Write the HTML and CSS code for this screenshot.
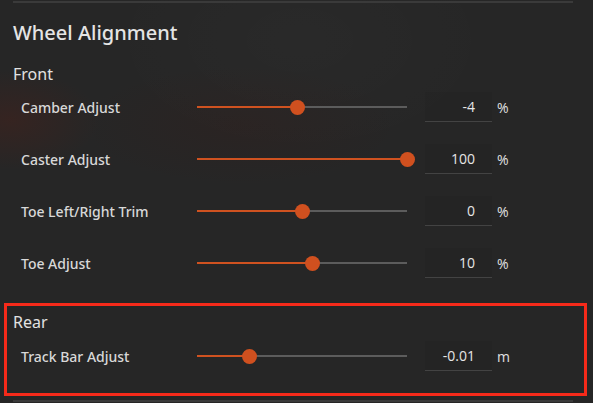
FILE: index.html
```html
<!DOCTYPE html>
<html lang="en">
<head>
  <meta charset="UTF-8" />
  <meta name="viewport" content="width=device-width, initial-scale=1" />
  <title>Wheel Alignment</title>
  <link rel="stylesheet" href="styles.css">
</head>
<body>
  <div class="panel">
    <div class="rule"></div>
    <h2>Wheel Alignment</h2>

    <div class="group">
      <div class="group-title">Front</div>

      <div class="row">
        <span class="label">Camber Adjust</span>
        <div class="slider">
          <div class="fill" style="width: 48%"></div>
          <div class="thumb"></div>
          <div class="rest"></div>
        </div>
        <div class="value">-4</div>
        <span class="unit">%</span>
      </div>

      <div class="row">
        <span class="label">Caster Adjust</span>
        <div class="slider">
          <div class="fill" style="width: 100%"></div>
          <div class="thumb"></div>
          <div class="rest"></div>
        </div>
        <div class="value">100</div>
        <span class="unit">%</span>
      </div>

      <div class="row">
        <span class="label">Toe Left/Right Trim</span>
        <div class="slider">
          <div class="fill" style="width: 50%"></div>
          <div class="thumb"></div>
          <div class="rest"></div>
        </div>
        <div class="value">0</div>
        <span class="unit">%</span>
      </div>

      <div class="row">
        <span class="label">Toe Adjust</span>
        <div class="slider">
          <div class="fill" style="width: 55%"></div>
          <div class="thumb"></div>
          <div class="rest"></div>
        </div>
        <div class="value">10</div>
        <span class="unit">%</span>
      </div>
    </div>

    <div class="group rear">
      <div class="group-title">Rear</div>

      <div class="row">
        <span class="label">Track Bar Adjust</span>
        <div class="slider">
          <div class="fill" style="width: 25%"></div>
          <div class="thumb"></div>
          <div class="rest"></div>
        </div>
        <div class="value">-0.01</div>
        <span class="unit">m</span>
      </div>
    </div>

    <div class="rule bottom"></div>
  </div>
</body>
</html>
```

FILE: styles.css
```css
html, body { height: 100%; }
body {
  margin: 0;
  font-family: 'Noto Sans', 'Open Sans', sans-serif;
  color: #dedede;
  background-color: #262626;
  background-image:
    radial-gradient(ellipse 90px 50px at 10px 120px, rgba(90, 30, 20, 0.3), transparent),
    radial-gradient(ellipse 160px 60px at 240px 125px, rgba(60, 25, 20, 0.2), transparent),
    radial-gradient(ellipse 200px 120px at 300px 40px, rgba(255, 255, 255, 0.015), transparent);
  overflow: hidden;
}
.panel {
  padding: 1px 20px 0 13px;
}
.rule {
  height: 2px;
  background: #3a3a3a;
}
.rule.bottom { margin-top: 4px; }
h2 {
  margin: 16px 0 0;
  font-size: 20px;
  line-height: 28px;
  font-weight: 500;
  color: #e4e4e4;
}
.group { margin-top: 16px; }
.group-title {
  font-size: 16px;
  line-height: 22px;
  color: #e2e2e2;
}
.row {
  display: flex;
  align-items: center;
  height: 48px;
  margin-top: 4px;
  padding-left: 8px;
}
.group-title + .row { margin-top: -2px; }
.label {
  width: 176px;
  font-size: 14px;
  font-weight: 500;
  color: #d8d8d8;
}
.slider {
  display: flex;
  align-items: center;
  width: 210px;
  height: 16px;
}
.fill {
  height: 2px;
  background: #cf5220;
  flex: none;
}
.thumb {
  flex: none;
  width: 15px;
  height: 15px;
  margin: 0 -7.5px;
  border-radius: 50%;
  background: #d0501f;
  position: relative;
  z-index: 1;
}
.rest {
  flex: 1;
  height: 2px;
  background: #5c5c5c;
}
.value {
  margin-left: 18px;
  width: 67px;
  height: 30px;
  box-sizing: border-box;
  padding-right: 17px;
  border-bottom: 1px solid #434343;
  background: rgba(0, 0, 0, 0.03);
  text-align: right;
  font-family: 'Open Sans', 'Noto Sans', sans-serif;
  font-size: 14px;
  line-height: 30px;
  color: #e6e6e6;
}
.unit {
  margin-left: 5px;
  font-family: 'Open Sans', 'Noto Sans', sans-serif;
  font-size: 14px;
  color: #e0e0e0;
}
.rear {
  margin: 16px -14px 0 -9px;
  padding: 0 0 13px 6px;
  border: 3px solid #f52a1a;
}
.rear .group-title { margin-top: 5px; }
.rear .group-title + .row { margin-top: -1px; }
```
